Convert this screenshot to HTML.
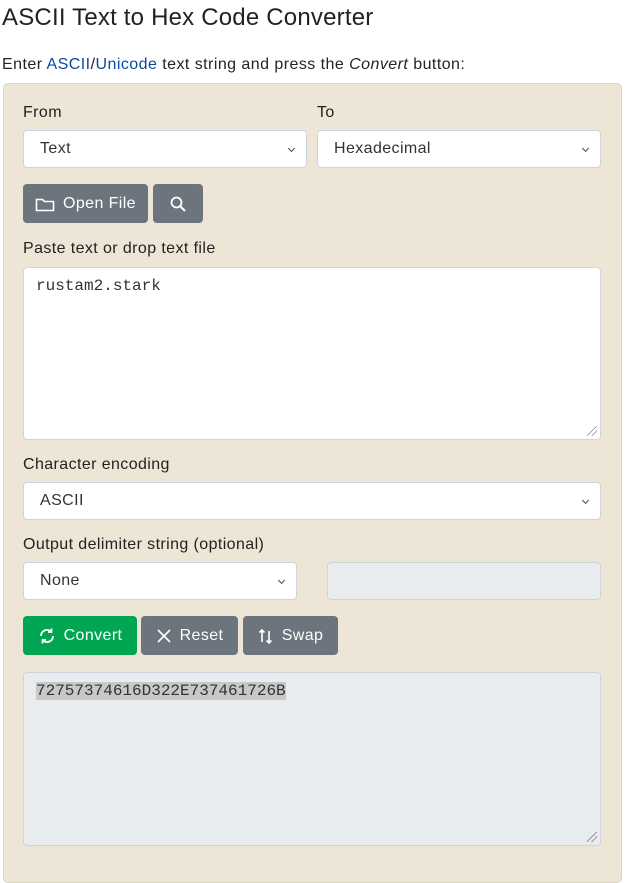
<!DOCTYPE html>
<html><head><style>
*{box-sizing:border-box;margin:0;padding:0}
body{width:635px;height:848px;overflow:hidden;background:#fff;font-family:"Liberation Sans",sans-serif;color:#212529;position:relative;letter-spacing:.4px}
.a{position:absolute}
h1{position:absolute;left:2px;top:4px;font-size:24px;font-weight:400;color:#222;letter-spacing:.2px}
.sub{left:2px;top:56px;font-size:16px;letter-spacing:.45px}
.sub a{color:#0a4a9a;text-decoration:none}
.panel{left:3px;top:83px;width:619px;height:800px;background:#ede6d6;border:1px solid #ddd6c4;border-radius:5px}
.lbl{font-size:16px;color:#222}
.sel,.ta{background:#fff;border:1px solid #ced4da;border-radius:4px;font-size:16px;color:#333}
.sel{height:38px;padding:9px 16px}
.sel:after{content:"";position:absolute;right:12px;top:15px;width:4px;height:4px;border-right:1px solid #444;border-bottom:1px solid #444;transform:rotate(45deg)}
.btn{height:39px;border-radius:4px;color:#fff;font-size:16px;display:flex;align-items:center;justify-content:center;gap:8px;background:#6c757d}
.mono{font-family:"Liberation Mono",monospace;font-size:16px;color:#333;letter-spacing:0}
.grip{position:absolute;right:3px;bottom:3px;width:10px;height:10px;background:linear-gradient(135deg,transparent 45%,#888 45%,#888 52%,transparent 52%,transparent 70%,#888 70%,#888 77%,transparent 77%)}
</style></head><body>
<h1>ASCII Text to Hex Code Converter</h1>
<div class="a sub">Enter <a>ASCII</a>/<a>Unicode</a> text string and press the <i>Convert</i> button:</div>
<div class="a panel"></div>
<div class="a lbl" style="left:23px;top:104px">From</div>
<div class="a lbl" style="left:317px;top:104px">To</div>
<div class="a sel" style="left:23px;top:130px;width:284px">Text</div>
<div class="a sel" style="left:317px;top:130px;width:284px">Hexadecimal</div>
<div class="a btn" style="left:23px;top:184px;width:125px"><svg width="20" height="16" viewBox="0 0 20 16"><path d="M1.5 3.5h6l2 2h9v9h-17z" fill="none" stroke="#fff" stroke-width="1.6"/></svg>Open File</div>
<div class="a btn" style="left:153px;top:184px;width:50px"><svg width="18" height="18" viewBox="0 0 18 18"><circle cx="7.5" cy="7.5" r="5" fill="none" stroke="#fff" stroke-width="1.8"/><path d="M11 11l5 5" stroke="#fff" stroke-width="2"/></svg></div>
<div class="a lbl" style="left:23px;top:240px">Paste text or drop text file</div>
<div class="a ta" style="left:23px;top:267px;width:578px;height:173px;padding:9px 12px"><span class="mono">rustam2.stark</span><div class="grip"></div></div>
<div class="a lbl" style="left:23px;top:456px">Character encoding</div>
<div class="a sel" style="left:23px;top:482px;width:578px">ASCII</div>
<div class="a lbl" style="left:23px;top:536px">Output delimiter string (optional)</div>
<div class="a sel" style="left:23px;top:562px;width:274px">None</div>
<div class="a" style="left:327px;top:562px;width:274px;height:38px;background:#e9ecef;border:1px solid #ced4da;border-radius:4px"></div>
<div class="a btn" style="left:23px;top:616px;width:114px;background:#00a651"><svg width="18" height="18" viewBox="0 0 18 18" fill="none" stroke="#fff" stroke-width="1.8"><path d="M3 9a6 6 0 0 1 10-4.5"/><path d="M15 9a6 6 0 0 1-10 4.5"/><path d="M13.5 1.5v3.5h-3.5"/><path d="M4.5 16.5v-3.5h3.5"/></svg>Convert</div>
<div class="a btn" style="left:141px;top:616px;width:97px"><svg width="16" height="16" viewBox="0 0 16 16"><path d="M2 2l12 12M14 2L2 14" stroke="#fff" stroke-width="1.7"/></svg>Reset</div>
<div class="a btn" style="left:243px;top:616px;width:95px"><svg width="16" height="18" viewBox="0 0 16 18" fill="none" stroke="#fff" stroke-width="1.6"><path d="M4 15V3M1.5 5.5L4 3l2.5 2.5"/><path d="M11 4v12M8.5 13.5L11 16l2.5-2.5"/></svg>Swap</div>
<div class="a" style="left:23px;top:672px;width:578px;height:174px;background:#e9ecef;border:1px solid #ced4da;border-radius:4px;padding:9px 12px"><span class="mono" style="background:#c8c8c8">72757374616D322E737461726B</span><div class="grip"></div></div>
</body></html>
